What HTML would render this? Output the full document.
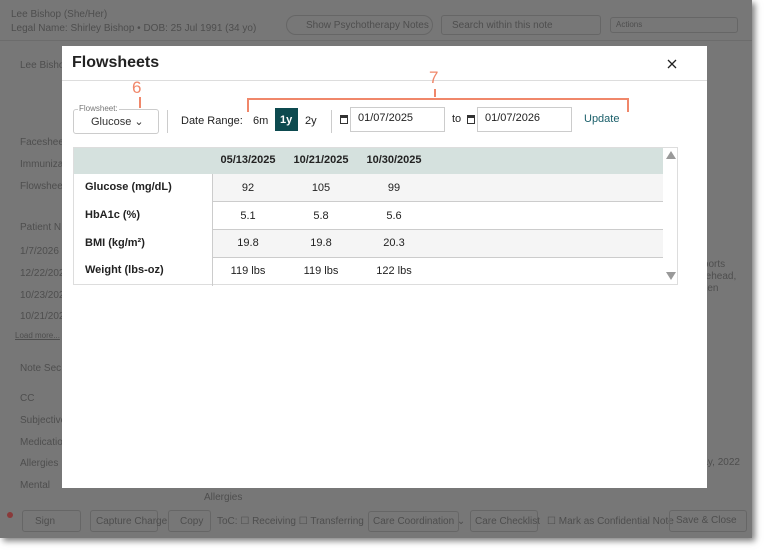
<!DOCTYPE html>
<html><head><meta charset="utf-8"><style>
*{box-sizing:border-box;margin:0;padding:0}
html,body{width:765px;height:550px;overflow:hidden}
body{background:#fff;font-family:"Liberation Sans",sans-serif;position:relative}
.app{position:absolute;left:0;top:0;width:752px;height:538px;background:#777;box-shadow:3px 3px 6px rgba(0,0,0,.5);color:#4e4e4e;font-size:10px;overflow:hidden}
.a{position:absolute;white-space:nowrap}
.bx{position:absolute;border:1px solid #666;border-radius:3px}
.hl{position:absolute;height:1px;background:#6c6c6c}
.modal{position:absolute;left:62px;top:46px;width:645px;height:442px;background:#fff}
.m{position:absolute;white-space:nowrap;color:#222}
.or{position:absolute;background:#f0876a}
.tbl{position:absolute;left:73px;top:147px;width:605px;height:138px;border:1px solid #ddd;background:#fff}
.c{position:absolute;font-size:11px;color:#222;text-align:center;width:70px}
</style></head><body>
<div class="app">
 <div class="a" style="left:11px;top:9px">Lee Bishop (She/Her)</div>
 <div class="a" style="left:11px;top:23px">Legal Name: Shirley Bishop • DOB: 25 Jul 1991 (34 yo)</div>
 <div class="bx" style="left:286px;top:15px;width:147px;height:20px;border-radius:10px"></div>
 <div class="a" style="left:306px;top:20px">Show Psychotherapy Notes</div>
 <div class="bx" style="left:441px;top:15px;width:160px;height:20px"></div>
 <div class="a" style="left:452px;top:20px">Search within this note</div>
 <div class="bx" style="left:610px;top:17px;width:128px;height:16px"></div>
 <div class="a" style="left:616px;top:20px;font-size:8px">Actions</div>
 <div class="hl" style="left:0;top:40px;width:752px"></div>
 <div class="a" style="left:20px;top:60px">Lee Bisho</div>
 <div class="a" style="left:20px;top:137px">Facesheet</div>
 <div class="a" style="left:20px;top:159px">Immunizations</div>
 <div class="a" style="left:20px;top:181px">Flowsheets</div>
 <div class="a" style="left:20px;top:222px">Patient N</div>
 <div class="a" style="left:20px;top:246px">1/7/2026</div>
 <div class="a" style="left:20px;top:268px">12/22/2025</div>
 <div class="a" style="left:20px;top:290px">10/23/2025</div>
 <div class="a" style="left:20px;top:311px">10/21/2025</div>
 <div class="a" style="left:15px;top:331px;font-size:8px;text-decoration:underline">Load more...</div>
 <div class="a" style="left:20px;top:363px">Note Sec</div>
 <div class="a" style="left:20px;top:393px">CC</div>
 <div class="a" style="left:20px;top:415px">Subjective</div>
 <div class="a" style="left:20px;top:437px">Medications</div>
 <div class="a" style="left:20px;top:458px">Allergies</div>
 <div class="a" style="left:20px;top:480px">Mental</div>
 <div class="a" style="left:694px;top:259px">reports</div>
 <div class="a" style="left:694px;top:271px">forehead,</div>
 <div class="a" style="left:694px;top:283px">taken</div>
 <div class="a" style="left:694px;top:457px">May, 2022</div>
 <div class="a" style="left:204px;top:492px">Allergies</div>
 <div style="position:absolute;left:7px;top:512px;width:6px;height:6px;border-radius:50%;background:#8a3a3a"></div>
 <div class="bx" style="left:22px;top:510px;width:59px;height:22px"></div>
 <div class="a" style="left:35px;top:516px">Sign</div>
 <div class="bx" style="left:90px;top:510px;width:68px;height:22px"></div>
 <div class="a" style="left:96px;top:516px">Capture Charge</div>
 <div class="bx" style="left:168px;top:510px;width:43px;height:22px"></div>
 <div class="a" style="left:180px;top:516px">Copy</div>
 <div class="a" style="left:217px;top:516px">ToC: ☐ Receiving ☐ Transferring</div>
 <div class="bx" style="left:368px;top:511px;width:91px;height:21px"></div>
 <div class="a" style="left:373px;top:516px">Care Coordination ⌄</div>
 <div class="bx" style="left:470px;top:510px;width:68px;height:22px"></div>
 <div class="a" style="left:475px;top:516px">Care Checklist</div>
 <div class="a" style="left:547px;top:516px">☐ Mark as Confidential Note</div>
 <div class="bx" style="left:669px;top:510px;width:78px;height:22px"></div>
 <div class="a" style="left:676px;top:515px">Save &amp; Close</div>
</div>
<div class="modal">
 <div class="m" style="left:10px;top:8px;font-size:16px;font-weight:bold">Flowsheets</div>
 <svg style="position:absolute;left:605px;top:13px" width="10" height="10" viewBox="0 0 10 10"><path d="M1 1L9 9M9 1L1 9" stroke="#222" stroke-width="1.3"/></svg>
 <div style="position:absolute;left:0;top:34px;width:645px;height:1px;background:#ddd"></div>
</div>
<div class="a" style="left:132px;top:78px;font-size:17px;color:#f0876a">6</div>
<div class="or" style="left:139px;top:97px;width:2px;height:11px"></div>
<div class="a" style="left:429px;top:68px;font-size:17px;color:#f0876a">7</div>
<div class="or" style="left:434px;top:89px;width:2px;height:8px"></div>
<div class="or" style="left:247px;top:98px;width:382px;height:2px"></div>
<div class="or" style="left:247px;top:98px;width:2px;height:14px"></div>
<div class="or" style="left:627px;top:98px;width:2px;height:14px"></div>
<div style="position:absolute;left:73px;top:109px;width:86px;height:25px;border:1px solid #ccc;border-radius:3px"></div>
<div class="m" style="left:78px;top:104px;font-size:8px;color:#777;background:#fff;padding:0 1px">Flowsheet:</div>
<div class="m" style="left:91px;top:115px;font-size:11px;color:#333">Glucose ⌄</div>
<div style="position:absolute;left:167px;top:110px;width:1px;height:23px;background:#ccc"></div>
<div class="m" style="left:181px;top:115px;font-size:11px">Date Range:</div>
<div class="m" style="left:253px;top:115px;font-size:11px">6m</div>
<div style="position:absolute;left:275px;top:108px;width:23px;height:23px;background:#0d4a4f"></div>
<div class="m" style="left:280px;top:114px;font-size:11px;color:#fff;font-weight:bold">1y</div>
<div class="m" style="left:305px;top:115px;font-size:11px">2y</div>
<div style="position:absolute;left:331px;top:110px;width:1px;height:23px;background:#ccc"></div>
<div style="position:absolute;left:340px;top:115px;width:8px;height:9px;border:1.5px solid #333;border-top-width:3px"></div>
<div style="position:absolute;left:350px;top:107px;width:95px;height:25px;border:1px solid #ccc"></div>
<div class="m" style="left:358px;top:112px;font-size:11px">01/07/2025</div>
<div class="m" style="left:452px;top:113px;font-size:11px">to</div>
<div style="position:absolute;left:467px;top:115px;width:8px;height:9px;border:1.5px solid #333;border-top-width:3px"></div>
<div style="position:absolute;left:477px;top:107px;width:95px;height:25px;border:1px solid #ccc"></div>
<div class="m" style="left:485px;top:112px;font-size:11px">01/07/2026</div>
<div class="m" style="left:584px;top:113px;font-size:11px;color:#1a5f6a">Update</div>
<div class="tbl">
 <div style="position:absolute;left:0;top:0;width:589px;height:26px;background:#d5e1de"></div>
 <div style="position:absolute;left:138px;top:26px;width:451px;height:28px;background:#f5f5f5;border-bottom:1px solid #ccc"></div>
 <div style="position:absolute;left:138px;top:54px;width:451px;height:28px;border-bottom:1px solid #ccc"></div>
 <div style="position:absolute;left:138px;top:82px;width:451px;height:28px;background:#f5f5f5;border-bottom:1px solid #ccc"></div>
 <div style="position:absolute;left:138px;top:26px;width:1px;height:112px;background:#ccc"></div>
 <div style="position:absolute;left:592px;top:3px;width:0;height:0;border:5px solid transparent;border-bottom:8px solid #999;border-top:0"></div>
 <div style="position:absolute;left:592px;top:124px;width:0;height:0;border:5px solid transparent;border-top:8px solid #999;border-bottom:0"></div>
 <div class="c" style="left:139px;top:6px;font-weight:bold">05/13/2025</div>
 <div class="c" style="left:212px;top:6px;font-weight:bold">10/21/2025</div>
 <div class="c" style="left:285px;top:6px;font-weight:bold">10/30/2025</div>
 <div class="m" style="left:11px;top:33px;font-size:11px;font-weight:bold">Glucose (mg/dL)</div>
 <div class="m" style="left:11px;top:61px;font-size:11px;font-weight:bold">HbA1c (%)</div>
 <div class="m" style="left:11px;top:89px;font-size:11px;font-weight:bold">BMI (kg/m²)</div>
 <div class="m" style="left:11px;top:116px;font-size:11px;font-weight:bold">Weight (lbs-oz)</div>
 <div class="c" style="left:139px;top:34px">92</div><div class="c" style="left:212px;top:34px">105</div><div class="c" style="left:285px;top:34px">99</div>
 <div class="c" style="left:139px;top:62px">5.1</div><div class="c" style="left:212px;top:62px">5.8</div><div class="c" style="left:285px;top:62px">5.6</div>
 <div class="c" style="left:139px;top:89px">19.8</div><div class="c" style="left:212px;top:89px">19.8</div><div class="c" style="left:285px;top:89px">20.3</div>
 <div class="c" style="left:139px;top:117px">119 lbs</div><div class="c" style="left:212px;top:117px">119 lbs</div><div class="c" style="left:285px;top:117px">122 lbs</div>
</div>
</body></html>
